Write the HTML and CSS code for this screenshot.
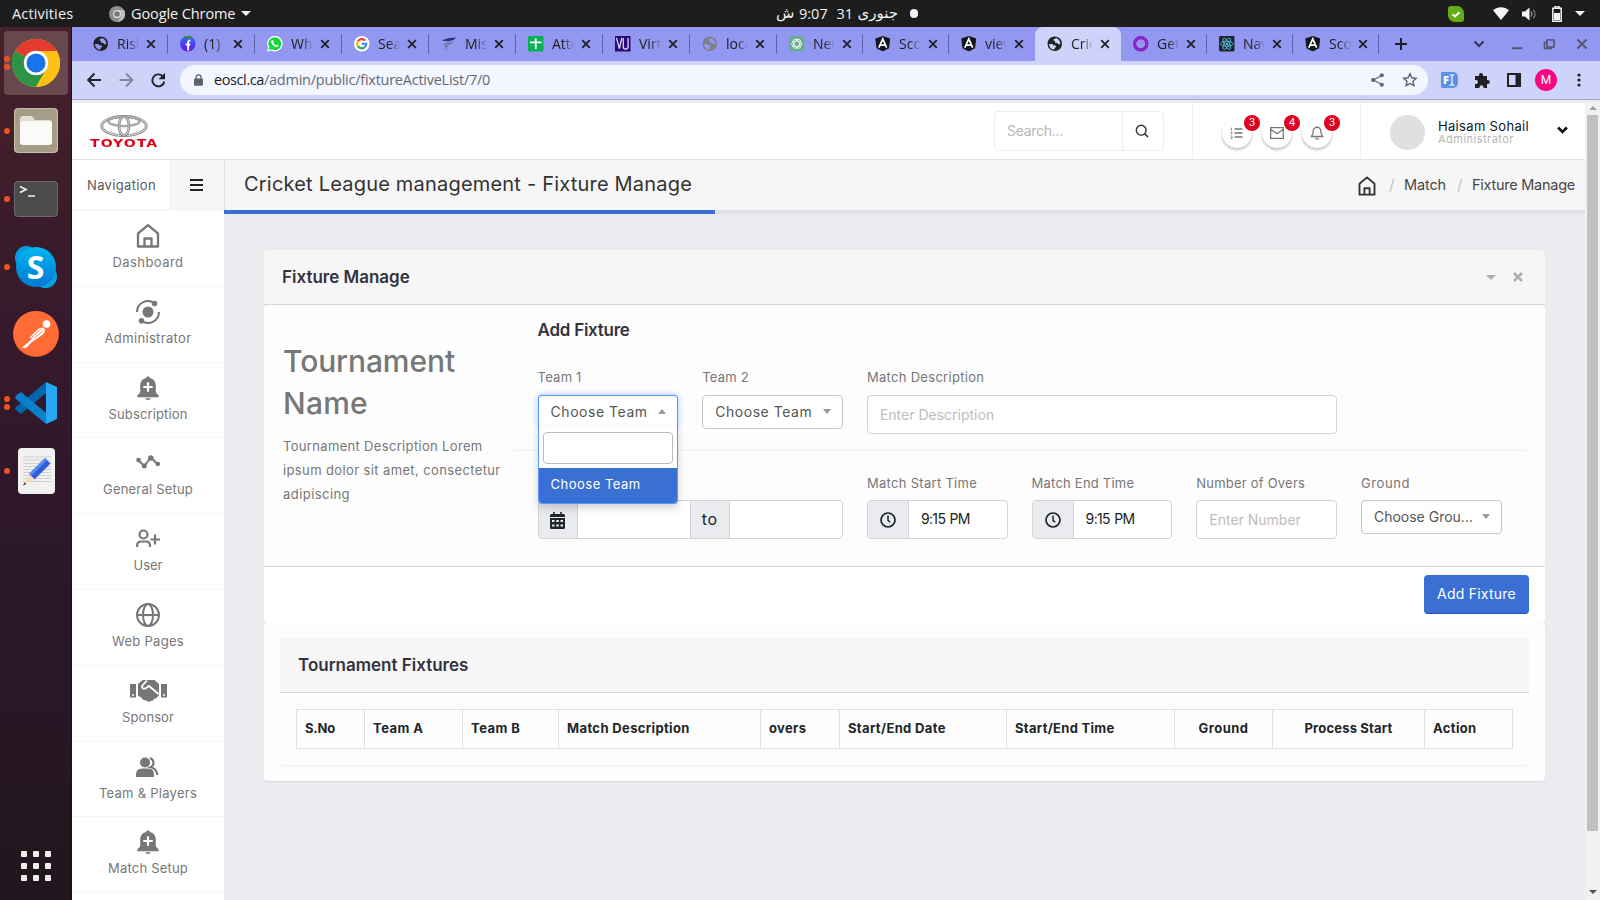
FILE: index.html
```html
<!DOCTYPE html>
<html lang="en">
<head>
<meta charset="utf-8">
<title>Fixture Manage</title>
<link rel="stylesheet" href="styles.css">
</head>
<body>
<svg class="defs" width="0" height="0">
  <symbol id="x" viewBox="0 0 10 10"><path d="M1.2 1.2l7.6 7.6M8.800 1.200l-7.600 7.600" fill="none" stroke="currentColor" stroke-width="1.800"/></symbol>
  <symbol id="globe" viewBox="0 0 16 16"><circle cx="8" cy="8" r="7.500" fill="currentColor"/><path d="M2 8.200h3.500l1.500 1.600h2.200v1.700l-1.500 1v1.800Q2.500 13.800 2 8.200zM9.500 2q-1 .8-2.700 1v1.600l1.600.8v1.800h2.200l1 1.200h2.200Q13.800 4 9.500 2z" fill="var(--hole)"/></symbol>
  <symbol id="angular" viewBox="0 0 16 16"><path d="M8 0l7.700 2.600-1.200 10L8 16l-6.500-3.400L.3 2.600z" fill="#14161f"/><path d="M4 12L8 3l4 9M5.500 9.500h5" fill="none" stroke="#fff" stroke-width="1.800"/></symbol>
  <symbol id="home" viewBox="0 0 24 24"><path d="M2 9.500L12 1.200l10 8.300V22.500H2zM8.500 22V14.500h7V22" fill="none" stroke="currentColor" stroke-width="2.300" stroke-linejoin="round"/></symbol>
  <symbol id="bellplus" viewBox="0 0 24 24"><path d="M12 .5c1.100 0 1.800.6 2 1.600 3.600 1 5.800 3.900 5.800 7.700v6.700l2.900 3v1.700H1.300v-1.700l2.900-3V9.800c0-3.800 2.200-6.700 5.800-7.700.2-1 .9-1.600 2-1.600zM9 22.300h6c-.6 1.200-1.700 1.700-3 1.700s-2.400-.5-3-1.700z" fill="currentColor"/><path d="M12 6.300v9.400M7.300 11h9.400" stroke="#fff" stroke-width="2.200"/></symbol>
  <symbol id="clock" viewBox="0 0 16 16"><circle cx="8" cy="8" r="7" fill="none" stroke="currentColor" stroke-width="1.700"/><path d="M8 3.500V8.300l2.200 1.900" fill="none" stroke="currentColor" stroke-width="1.500"/></symbol>
</svg>

<div class="topbar">
  <span class="tx activities">Activities</span>
  <svg class="tb-chrome" viewBox="0 0 16 16"><circle cx="8" cy="8" r="8" fill="#8d8d8d"/><path d="M8 4h7a8 8 0 0 1-6 12l3-6" fill="#bdbdbd"/><circle cx="8" cy="8" r="4" fill="#ddd"/><circle cx="8" cy="8" r="2.800" fill="#777"/></svg>
  <span class="tx appname">Google Chrome</span>
  <i class="tri app-tri"></i>
  <div class="clockbox"><span class="ur">ش</span><span class="tx hm">9:07</span><span class="tx dd">31</span><span class="ur mon">جنوری</span><i class="dot"></i></div>
  <div class="tray">
    <svg class="tr-skype" viewBox="0 0 16 16"><path d="M3 0h7c4 1 6 4 6 8v5c0 2-1 3-3 3H7c-4 0-7-3-7-7V3c0-2 1-3 3-3z" fill="#63ab17"/><path d="M4.500 8.200l2.500 2.300 4.500-4.300" fill="none" stroke="#fff" stroke-width="1.900"/></svg>
    <svg class="tr-wifi" viewBox="0 0 16 13"><path d="M0 3.200C4.500-.7 11.500-.7 16 3.200L8 13z" fill="#f4f4f4"/></svg>
    <svg class="tr-vol" viewBox="0 0 15 14"><path d="M0 4.500h3L7.500.5v13L3 9.500H0z" fill="#f4f4f4"/><path d="M9 4.500c1.300 1.500 1.300 3.500 0 5M11.300 2.700c2.400 2.500 2.400 6 0 8.600" fill="none" stroke="#888" stroke-width="1.200"/></svg>
    <svg class="tr-bat" viewBox="0 0 10 16"><path d="M3 0h4v2H3zM0.800 2.300h8.400v12.900H.8z" fill="none" stroke="#f4f4f4" stroke-width="1.500"/><path d="M2 7h6v7H2z" fill="#f4f4f4"/></svg>
    <i class="tri"></i>
  </div>
</div>

<div class="desk">
<aside class="dock">
  <div class="dk active"><i class="run two"></i>
    <svg width="48" height="48" viewBox="0 0 48 48"><circle cx="24" cy="24" r="24" fill="#fbc116"/><path d="M24 24L3.200 12A24 24 0 0 1 44.800 12z" fill="#e33b2e"/><path d="M3.200 12A24 24 0 0 0 24 48l10.400-18L24 24z" fill="#2c9447"/><path d="M24 12h20.800A24 24 0 0 1 24 48l10.400-18z" fill="#fbc116"/><circle cx="24" cy="24" r="12.200" fill="#fff"/><circle cx="24" cy="24" r="9.500" fill="#1a73e8"/></svg></div>
  <div class="dk d-files"><i class="run"></i>
    <svg width="44" height="45" viewBox="0 0 44 45"><rect width="44" height="45" rx="4" fill="#a59d88"/><rect x=".5" y=".5" width="43" height="44" rx="4" fill="none" stroke="#c4bda8"/><path d="M6 11q0-3 3-3h9l3 4h14q3 0 3 3v18H6z" fill="#e4dfd2"/><rect x="6" y="13" width="32" height="24" rx="3" fill="#fafaf8"/></svg></div>
  <div class="dk d-term"><i class="run"></i>
    <svg width="44" height="36" viewBox="0 0 44 36"><rect width="44" height="36" rx="4" fill="#4b4b4b"/><rect x=".5" y=".5" width="43" height="35" rx="4" fill="none" stroke="#6b6b6b"/><path d="M6 5.500l6 3-6 3M14 15h7" fill="none" stroke="#f2f2f2" stroke-width="1.700"/></svg></div>
  <div class="dk d-skype"><i class="run"></i>
    <svg width="42" height="42" viewBox="0 0 42 42"><defs><linearGradient id="sk" x2="0" y2="1"><stop stop-color="#00b7f0"/><stop offset="1" stop-color="#0078d4"/></linearGradient></defs><circle cx="11.500" cy="11.500" r="11.500" fill="#0a9ade"/><circle cx="30.500" cy="30.500" r="11.500" fill="#0ba0d8"/><circle cx="21" cy="21" r="20" fill="url(#sk)"/></svg><b class="sk-s">S</b></div>
  <div class="dk d-postman">
    <svg width="46" height="46" viewBox="0 0 46 46"><circle cx="23" cy="23" r="23" fill="#e3592a"/><circle cx="23" cy="22.500" r="22.500" fill="#ff6c37"/><circle cx="33.500" cy="13" r="3.800" fill="#fff"/><path d="M31 17c-3-2-7 2-10 5l-5 5 4-.5-5 5-6 5 4 .5 6-6 9-6c3-2 5-5 3-8z" fill="#fff"/><path d="M19 26l9-8M21 27l9-7" stroke="#ff6c37" stroke-width=".8"/></svg></div>
  <div class="dk d-code"><i class="run two"></i>
    <svg width="42" height="42" viewBox="0 0 42 42"><path d="M31 0v11L6 32l-5-3.500c-1-1-1-2.500 0-3.500z" fill="#0065a9"/><path d="M31 42V31L6 10l-5 3.500c-1 1-1 2.500 0 3.500z" fill="#0a7fca"/><path d="M31 0l11 5v32l-11 5z" fill="#27a7f3"/></svg></div>
  <div class="dk d-edit"><i class="run"></i>
    <svg width="37" height="46" viewBox="0 0 37 46"><rect width="37" height="46" rx="4" fill="#f1f1ef"/><path d="M5 9h28M5 12h28M5 15.500h28M5 18.500h28M5 21.500h28M5 24.500h28M5 27.500h28M5 30.500h28M5 33.500h28" stroke="#cfcfcf"/><path d="M27 10l5.500 5.500-16 16L11 26z" fill="#2f5fd8"/><path d="M27 10l2 2-16 16-2-2z" fill="#5b8bf0"/><path d="M11 26l5.500 5.500L5 37.500z" fill="#f7dcc0"/><path d="M6.500 34.500l1.800 1.500L5 37.500z" fill="#333"/></svg></div>
  <div class="apps"><i></i><i></i><i></i><i></i><i></i><i></i><i></i><i></i><i></i></div>
</aside>

<div class="browser">
<div class="tabs">
  <div class="tab"><svg class="fv k"><use href="#globe"/></svg><span>Risk</span><svg class="cl"><use href="#x"/></svg></div>
  <div class="tab"><svg class="fv" viewBox="0 0 16 16"><defs><linearGradient id="fb" x2="0" y2="1"><stop stop-color="#2a73f2"/><stop offset="1" stop-color="#6a12f0"/></linearGradient></defs><circle cx="8" cy="8" r="8" fill="url(#fb)"/><path d="M4 1.200h8" stroke="#3f8f1c" stroke-width="1.800"/><path d="M8.400 15V6.500q0-2 2.400-1.800M5.800 8.800h4.800" fill="none" stroke="#fff" stroke-width="1.900"/></svg><span>(1) F</span><svg class="cl"><use href="#x"/></svg></div>
  <div class="tab"><svg class="fv" viewBox="0 0 16 16"><path d="M0 16l1.200-4.200A8 8 0 1 1 4.500 15z" fill="#fff"/><path d="M1.500 14.500l1-3A6.600 6.600 0 1 1 5 13.800z" fill="#10d83a"/><path d="M5 4.500q1.500-1 2 1.500L6.500 7q1 2 2.700 2.600l1-.9q2.300.6 1.300 2-2.500 1.800-5.500-1.300T5 4.500z" fill="#fff"/></svg><span>Wha</span><svg class="cl"><use href="#x"/></svg></div>
  <div class="tab"><svg class="fv" viewBox="0 0 16 16"><circle cx="8" cy="8" r="8" fill="#fff"/><g fill="none" stroke-width="2.200"><path d="M4 5.600a4.700 4.700 0 0 1 7.500-1" stroke="#ea4335"/><path d="M4 5.500a4.700 4.700 0 0 0 0 5" stroke="#fbbc05"/><path d="M4 10.500a4.700 4.700 0 0 0 7 1.200" stroke="#34a853"/><path d="M8 8h4.700q0 2.400-1.700 3.700" stroke="#4285f4"/></g></svg><span>Sear</span><svg class="cl"><use href="#x"/></svg></div>
  <div class="tab"><svg class="fv" viewBox="0 0 16 16"><path d="M1 5c4-3 8-3 15-3.500-3 3.500-7 3.500-9 4z" fill="#27357c"/><path d="M3 8c3-1.500 6-1.500 10-2-2 3-4 3-6 3.500L5 15z" fill="#6e7fa8"/></svg><span>Miss</span><svg class="cl"><use href="#x"/></svg></div>
  <div class="tab"><svg class="fv" viewBox="0 0 16 16"><rect width="16" height="16" rx="1" fill="#08b155"/><path d="M2 6.500h12M8 2.500v11" stroke="#fff" stroke-width="1.900"/></svg><span>Atte</span><svg class="cl"><use href="#x"/></svg></div>
  <div class="tab"><svg class="fv" viewBox="0 0 16 16"><rect width="16" height="16" fill="#2c0b78"/><path d="M1.500 2l3 11L7 2M8.500 2v9q0 2.500 2.500 2.500T13.500 11V2" fill="none" stroke="#e8dcf8" stroke-width="1.300"/></svg><span>Virt</span><svg class="cl"><use href="#x"/></svg></div>
  <div class="tab"><svg class="fv gr"><use href="#globe"/></svg><span>loca</span><svg class="cl"><use href="#x"/></svg></div>
  <div class="tab"><svg class="fv" viewBox="0 0 16 16"><rect width="16" height="16" rx="2.500" fill="#6bab95"/><g fill="none" stroke="#fff" stroke-width=".8"><ellipse cx="8" cy="8" rx="5.300" ry="2.800"/><ellipse cx="8" cy="8" rx="5.300" ry="2.800" transform="rotate(60 8 8)"/><ellipse cx="8" cy="8" rx="5.300" ry="2.800" transform="rotate(120 8 8)"/></g></svg><span>New</span><svg class="cl"><use href="#x"/></svg></div>
  <div class="tab"><svg class="fv"><use href="#angular"/></svg><span>Scop</span><svg class="cl"><use href="#x"/></svg></div>
  <div class="tab nosep"><svg class="fv"><use href="#angular"/></svg><span>view</span><svg class="cl"><use href="#x"/></svg></div>
  <div class="tab on"><svg class="fv k"><use href="#globe"/></svg><span>Crick</span><svg class="cl"><use href="#x"/></svg></div>
  <div class="tab"><svg class="fv" viewBox="0 0 16 16"><circle cx="8" cy="8" r="6.300" fill="none" stroke="#8213c0" stroke-width="3.200"/><circle cx="8" cy="8" r="6.300" fill="none" stroke="#b56be0" stroke-width=".8" stroke-dasharray="2 1.500"/></svg><span>Get</span><svg class="cl"><use href="#x"/></svg></div>
  <div class="tab"><svg class="fv" viewBox="0 0 16 16"><rect width="16" height="16" rx="1.500" fill="#20232a"/><g fill="none" stroke="#53c1de" stroke-width=".9"><ellipse cx="8" cy="8" rx="6.500" ry="2.600"/><ellipse cx="8" cy="8" rx="6.500" ry="2.600" transform="rotate(60 8 8)"/><ellipse cx="8" cy="8" rx="6.500" ry="2.600" transform="rotate(120 8 8)"/></g><circle cx="8" cy="8" r="1.400" fill="#53c1de"/></svg><span>Navi</span><svg class="cl"><use href="#x"/></svg></div>
  <div class="tab"><svg class="fv"><use href="#angular"/></svg><span>Scop</span><svg class="cl"><use href="#x"/></svg></div>
  <svg class="plus" viewBox="0 0 12 12"><path d="M6 0v12M0 6h12" stroke="#202124" stroke-width="2"/></svg>
  <svg class="winctl" viewBox="0 0 120 20"><path d="M5.500 7.500l4.500 4.500 4.500-4.500" fill="none" stroke="#34365c" stroke-width="2"/><g fill="none" stroke="#54566f" stroke-width="1.900"><path d="M43 14.200h10.500"/><path d="M78 6h7v7h-7zM78 8.500h-2.500v6H82V13" stroke-width="1.700"/><path d="M108.500 5.500l9 9M117.500 5.500l-9 9" stroke-width="2"/></g></svg>
</div>
<div class="toolbar">
  <svg class="nav3" viewBox="0 0 80 16"><g fill="none" stroke-width="1.900"><path d="M14 8H1.500M7.500 1.500L1.200 8l6.300 6.500" stroke="#202124"/><path d="M32.500 8H45M39 1.500L45.400 8 39 14.500" stroke="#8286a3"/><path d="M75.800 4.300A6 6 0 1 0 77.300 9.500" stroke="#202124"/></g><path d="M78 .8v6.400h-6.400z" fill="#202124"/></svg>
  <div class="omni">
    <svg class="lock" viewBox="0 0 9 12"><rect y="4.500" width="9" height="7.300" rx="1" fill="#5f6368"/><path d="M2 5V3.300a2.500 2.500 0 0 1 5 0V5" fill="none" stroke="#5f6368" stroke-width="1.300"/></svg>
    <span class="tx host">eoscl.ca</span><span class="tx path">/admin/public/fixtureActiveList/7/0</span>
    <svg class="share" viewBox="0 0 13 14"><path d="M10.500 2.500L2.500 7l8 4.500" fill="none" stroke="#5f6368" stroke-width="1.200"/><g fill="#5f6368"><circle cx="10.800" cy="2.300" r="2"/><circle cx="2.200" cy="7" r="2.100"/><circle cx="10.800" cy="11.700" r="2"/></g></svg>
    <svg class="star" viewBox="0 0 16 16"><path d="M8 1.800l1.900 4 4.400.5-3.300 3 .9 4.400L8 11.500l-3.900 2.200.9-4.400-3.300-3 4.400-.5z" fill="none" stroke="#5f6368" stroke-width="1.400"/></svg>
  </div>
  <div class="exts">
    <div class="fi"><b>F</b><svg width="6" height="12" viewBox="0 0 6 12"><path d="M.5.800q2.500 0 2.500 1.500v7.500q0 1.500-2.500 1.500M5.500.800q-2.500 0-2.500 1.500v7.500q0 1.500 2.500 1.500" fill="none" stroke="#fff" stroke-width="1.100"/></svg></div>
    <svg class="puz" viewBox="0 0 16 16"><path d="M1 4h4V3a2 2 0 0 1 4 0v1h4v4h.8a2 2 0 0 1 0 4H13v4H9.500v-.8a2 2 0 0 0-4 0V16H1v-4h1a2 2 0 0 0 0-4H1z" fill="#202124"/></svg>
    <svg class="panel-i" viewBox="0 0 14 14"><path d="M1 1h12v12H1z" fill="none" stroke="#202124" stroke-width="2"/><path d="M8.500 1H13v12H8.500z" fill="#202124"/></svg>
    <span class="me">M</span>
    <svg class="dots" viewBox="0 0 4 14"><g fill="#202124"><circle cx="2" cy="2" r="1.600"/><circle cx="2" cy="7" r="1.600"/><circle cx="2" cy="12" r="1.600"/></g></svg>
  </div>
</div>

<div class="view">
<div class="page">
  <header class="head">
    <div class="logo">
      <svg width="48" height="22" viewBox="0 0 48 22"><g fill="none"><ellipse cx="24" cy="11" rx="22.300" ry="9.500" stroke="#858585" stroke-width="2.800"/><ellipse cx="24" cy="10.800" rx="22.300" ry="9.600" stroke="#cdcdcd" stroke-width="1.300"/><ellipse cx="24" cy="6.300" rx="15.500" ry="4.800" stroke="#858585" stroke-width="2.300"/><ellipse cx="24" cy="6.200" rx="15.500" ry="4.800" stroke="#cdcdcd" stroke-width="1"/><ellipse cx="24" cy="11" rx="5" ry="9.300" stroke="#858585" stroke-width="2.600"/><ellipse cx="24" cy="11" rx="5" ry="9.300" stroke="#cdcdcd" stroke-width="1.100"/></g></svg>
      <b>TOYOTA</b>
    </div>
    <div class="search"><span class="tx s-ph">Search...</span><div class="s-btn"><svg width="14" height="14" viewBox="0 0 14 14"><circle cx="6.200" cy="6.200" r="4.900" fill="none" stroke="#333" stroke-width="1.400"/><path d="M9.800 9.800l3.200 3.200" stroke="#333" stroke-width="1.700"/></svg></div></div>
    <div class="notes">
      <div class="nt"><svg width="14" height="12" viewBox="0 0 14 12"><path d="M4.500 2h8M4.500 6h8M4.500 10h8" stroke="#777" stroke-width="1.300"/><path d="M1.500.5v3M.5 5.200h1.500v1.600H.6M.5 9h1.500v2.500H.5" fill="none" stroke="#777" stroke-width=".8"/></svg><em>3</em></div>
      <div class="nt"><svg width="14" height="12" viewBox="0 0 14 12"><path d="M.7.7h12.600v10.600H.7zM1 2.500l6 4.300 6-4.300" fill="none" stroke="#777" stroke-width="1.300"/></svg><em>4</em></div>
      <div class="nt"><svg width="14" height="14" viewBox="0 0 14 14"><path d="M7 1.300c2.400 0 3.800 1.700 3.800 4 0 3.300 1 4 1.900 5.200H1.300C2.200 9.300 3.200 8.600 3.200 5.300c0-2.300 1.400-4 3.800-4zM5.500 12.200q1.500 1.500 3 0M7 0v1.500" fill="none" stroke="#777" stroke-width="1.300" stroke-linejoin="round"/></svg><em>3</em></div>
    </div>
    <div class="user"><i class="ava"></i><div class="who"><span class="tx nm">Haisam Sohail</span><span class="tx rl">Administrator</span></div>
      <svg class="chev" viewBox="0 0 10 7"><path d="M1 1.200l4 4 4-4" fill="none" stroke="#111" stroke-width="2.400"/></svg></div>
  </header>

  <div class="sub">
    <div class="navt"><span class="tx nv">Navigation</span></div>
    <div class="burger"><i></i><i></i><i></i></div>
    <div class="titlebar"><span class="tx ttl">Cricket League management - Fixture Manage</span>
      <nav class="crumb"><svg width="18" height="20" viewBox="0 0 24 26"><path d="M2 10L12 1.500 22 10v14.500H2zM8.500 24V16h7v8" fill="none" stroke="#333" stroke-width="2.500" stroke-linejoin="round"/></svg><span class="sl s1">/</span><span class="tx mt">Match</span><span class="sl">/</span><span class="tx fm">Fixture Manage</span></nav>
    </div>
  </div>

  <div class="cols">
  <aside class="side">
    <div class="it"><svg width="24" height="24"><use href="#home"/></svg><span class="tx n1">Dashboard</span></div>
    <div class="it"><svg width="24" height="24" viewBox="0 0 24 24"><circle cx="12" cy="12" r="5.500" fill="currentColor"/><g fill="none" stroke="currentColor" stroke-width="2"><path d="M1 12A11 11 0 0 1 18 2.800M23 12A11 11 0 0 1 6 21.200"/></g><circle cx="18.500" cy="3.500" r="2.800" fill="currentColor"/><circle cx="5.500" cy="20.800" r="2.800" fill="currentColor"/></svg><span class="tx n2">Administrator</span></div>
    <div class="it"><svg width="24" height="24"><use href="#bellplus"/></svg><span class="tx n3">Subscription</span></div>
    <div class="it"><svg width="24" height="24" viewBox="0 0 24 24"><path d="M2.300 9.300L8.300 15l6.500-8.500 7.200 7" fill="none" stroke="currentColor" stroke-width="2"/><g fill="currentColor"><circle cx="2.500" cy="9" r="2.300"/><circle cx="8.300" cy="15" r="2.500"/><circle cx="14.800" cy="7" r="2.800"/><circle cx="21.800" cy="13" r="2.300"/></g></svg><span class="tx n4">General Setup</span></div>
    <div class="it"><svg width="24" height="24" viewBox="0 0 24 24"><g fill="none" stroke="currentColor" stroke-width="2.200"><circle cx="7.500" cy="7.500" r="4"/><path d="M1.100 20v-1.500q0-4 4-4H10q4 0 4 4V20M19 7.500v10M14.500 12.500h9.500"/></g></svg><span class="tx n5">User</span></div>
    <div class="it"><svg width="24" height="24" viewBox="0 0 24 24"><g fill="none" stroke="currentColor" stroke-width="2"><circle cx="12" cy="12" r="11"/><ellipse cx="12" cy="12" rx="5" ry="11"/><path d="M1 12h22"/></g></svg><span class="tx n6">Web Pages</span></div>
    <div class="it"><svg width="37" height="24" viewBox="0 0 37 24"><g fill="currentColor"><path d="M0 5h6v13.500H0zM31 5h6v13.500h-6z"/><path d="M8 5l4.500-4h12l4.500 4v11l-2.500 3-2.200.8-1.800 2-2 .2-2 1-2.500-1.500-2.500-.5L10 17.500 8 17z"/></g><path d="M17 1.500L12 7q0 3.500 3.500 2.500L19 7l9.500 8" fill="none" stroke="#fff" stroke-width="1.800"/><circle cx="3" cy="16" r="1" fill="#fff"/><circle cx="34" cy="16" r="1" fill="#fff"/></svg><span class="tx n7">Sponsor</span></div>
    <div class="it"><svg width="24" height="24" viewBox="0 0 24 24"><circle cx="9" cy="7.500" r="5" fill="currentColor"/><path d="M0 22v-2.500q0-6 6-6h6q6 0 6 6V22z" fill="currentColor"/><path d="M14 3q3.500 1.500 3.500 4.700t-3 4.600q6 1 7 7.700" fill="none" stroke="currentColor" stroke-width="2.100"/></svg><span class="tx n8">Team &amp; Players</span></div>
    <div class="it"><svg width="24" height="24"><use href="#bellplus"/></svg><span class="tx n9">Match Setup</span></div>
    <div class="it"></div>
  </aside>

  <main class="main">
    <div class="progress"><i></i></div>
    <section class="card">
      <div class="ch"><span class="tx h1">Fixture Manage</span><i class="tri ct"></i><svg class="cx" viewBox="0 0 10 10"><path d="M1 1l8 8M9 1l-8 8" stroke="#b0b0b0" stroke-width="2.600"/></svg></div>
      <div class="cb">
        <div class="intro"><h2><span class="tx b1">Tournament</span><br><span class="tx b2">Name</span></h2>
          <p><span class="tx p1">Tournament Description Lorem</span><br><span class="tx p2">ipsum dolor sit amet, consectetur</span><br><span class="tx p3">adipiscing</span></p></div>
        <div class="form">
          <div class="af"><span class="tx h2">Add Fixture</span></div>
          <div class="grid g1">
            <div class="f"><label class="tx">Team 1</label>
              <div class="sel open"><span class="tx ctm">Choose Team</span><i class="tri up"></i>
                <div class="drop"><div class="dsearch"></div><div class="opt"><span class="tx ctd">Choose Team</span></div></div></div></div>
            <div class="f"><label class="tx">Team 2</label><div class="sel"><span class="tx ctm">Choose Team</span><i class="tri gy"></i></div></div>
            <div class="f w3"><label class="tx l3">Match Description</label><div class="inp"><span class="tx">Enter Description</span></div></div>
          </div>
          <hr>
          <div class="grid g2">
            <div class="f w2"><label>&nbsp;</label><div class="group"><div class="add a1"><svg width="15" height="17" viewBox="0 0 15 17"><path d="M3.200 0h1.600v2h5.400V0h1.600v2H13.500q1.500 0 1.500 1.500V5H0V3.500Q0 2 1.500 2h1.700z" fill="#212529"/><path d="M0 6h15v9.500q0 1.500-1.500 1.500h-12Q0 17 0 15.500z" fill="#212529"/><path d="M2 8h2.500v2H2zM6.300 8h2.500v2H6.300zM10.500 8H13v2h-2.500zM2 12.500h2.500v2H2zM6.300 12.500h2.500v2H6.300zM10.500 12.500H13v2h-2.500z" fill="#e9ebef"/></svg></div><div class="gi"></div><div class="add mid"><span class="tx to">to</span></div><div class="gi"></div></div></div>
            <div class="f"><label class="tx l4">Match Start Time</label><div class="group"><div class="add a2"><svg width="16" height="16"><use href="#clock"/></svg></div><div class="gi tm"><span class="tx tme">9:15 PM</span></div></div></div>
            <div class="f"><label class="tx">Match End Time</label><div class="group"><div class="add a2"><svg width="16" height="16"><use href="#clock"/></svg></div><div class="gi tm"><span class="tx tme">9:15 PM</span></div></div></div>
            <div class="f"><label class="tx">Number of Overs</label><div class="inp"><span class="tx">Enter Number</span></div></div>
            <div class="f"><label class="tx l7">Ground</label><div class="sel"><span class="tx">Choose Grou...</span><i class="tri gy"></i></div></div>
          </div>
        </div>
      </div>
      <div class="cf"><div class="btn"><span class="tx bt">Add Fixture</span></div></div>
      <div class="tf">
        <div class="panel">
          <div class="ph"><span class="tx h3">Tournament Fixtures</span></div>
          <div class="pb">
            <div class="table">
              <div><span class="tx c1">S.No</span></div><div><span class="tx c2">Team A</span></div><div><span class="tx c3">Team B</span></div><div><span class="tx c4">Match Description</span></div><div><span class="tx c5">overs</span></div><div><span class="tx c6">Start/End Date</span></div><div><span class="tx c7">Start/End Time</span></div><div class="c"><span class="tx c8">Ground</span></div><div class="c"><span class="tx c9">Process Start</span></div><div><span class="tx c10">Action</span></div>
            </div>
          </div>
        </div>
      </div>
    </section>
  </main>
  </div>
</div>
<div class="scroll"><i class="tri sup"></i><div class="thumb"></div><i class="tri sdn"></i></div>
</div>
</div>
</div>
</body>
</html>
```
FILE: styles.css
```css
* { box-sizing: border-box; }
body { margin: 0; width: 1600px; height: 900px; overflow: hidden; display: flex; flex-direction: column; font-family: Inter, "Open Sans", sans-serif; color: #777; background: #ebebf0; }
svg { display: block; flex: none; }
.defs { position: absolute; }
.tx { white-space: nowrap; flex: none; }
.tri { display: block; width: 0; height: 0; border-style: solid; border-width: 5px 5px 0; border-color: #f4f4f4 transparent transparent; flex: none; }

/* desktop bar */
.topbar { height: 27px; flex: none; background: #1d1d1d; color: #f2f2f2; display: flex; align-items: center; padding-left: 12px; font: 14.500px/27px "Open Sans", sans-serif; }
.activities { width: 97px; letter-spacing: .15px; }
.tb-chrome { width: 16px; height: 16px; margin-right: 6px; }
.appname { width: 110px; letter-spacing: -.1px; }
.clockbox { display: flex; align-items: center; margin-left: 525px; width: 672px; }
.ur { font: 15px/27px "DejaVu Sans", sans-serif; flex: none; width: 18px; margin-right: 5px; }
.mon { width: 38px; margin-right: 14px; }
.hm { width: 37.500px; }
.dd { width: 21px; }
.dot { width: 8.500px; height: 8.500px; border-radius: 50%; background: #f4f4f4; }
.tray { display: flex; align-items: center; }
.tr-skype { width: 16px; height: 16px; margin-right: 29px; }
.tr-wifi { width: 16px; height: 13px; margin-right: 13px; }
.tr-vol { width: 15px; height: 14px; margin-right: 15px; }
.tr-bat { width: 10px; height: 16px; margin-right: 13px; }

.desk { flex: 1; display: flex; min-height: 0; }

/* dock */
.dock { width: 72px; flex: none; background: linear-gradient(#46222a 0, #3a1b2b 25%, #2e172b 55%, #21161d 100%); border-right: 1px solid #1b1018; display: flex; flex-direction: column; align-items: center; padding-top: 4px; }
.dk { width: 64px; display: flex; justify-content: center; align-items: center; position: relative; flex: none; }
.dk.active { height: 64px; border-radius: 4px; background: #6a4850; }
.d-files { height: 45px; margin-top: 13px; }
.d-term { height: 36px; margin-top: 28px; }
.d-skype { height: 42px; margin-top: 29px; }
.sk-s { position: absolute; font: bold 32px/42px "Open Sans", sans-serif; color: #fff; }
.d-postman { height: 46px; margin-top: 23px; }
.d-code { height: 42px; margin-top: 25px; }
.d-edit { height: 46px; margin-top: 24px; padding-left: 1px; }
.run { position: absolute; left: 0; top: calc(50% - 3px); width: 6px; height: 6px; border-radius: 50%; background: #e95420; }
.run.two { top: calc(50% - 7px); box-shadow: 0 8px #e95420; }
.apps { margin-top: auto; margin-bottom: 19px; display: grid; grid-template-columns: repeat(3, 6px); gap: 6px; }
.apps i { height: 6px; border-radius: 1px; background: #f0eeec; }

/* browser chrome */
.browser { flex: 1; min-width: 0; display: flex; flex-direction: column; }
.tabs { height: 34px; flex: none; background: #9297ef; display: flex; align-items: center; padding-left: 8.500px; font: 14px/34px "Open Sans", sans-serif; color: #202124; }
.tab { --hole: #9297ef; width: 86px; height: 34px; flex: none; display: flex; align-items: center; padding-left: 12.500px; background: linear-gradient(#5d61a8, #5d61a8) right center / 1px 20px no-repeat; }
.tab:nth-child(-n+8) { width: 87px; }
.tab span { width: 22px; margin-left: 8.500px; white-space: nowrap; flex: none; -webkit-mask-image: linear-gradient(90deg, #000 50%, transparent); mask-image: linear-gradient(90deg, #000 50%, transparent); }
.tab.nosep { background: none; }
.tab.on { --hole: #ced3fa; background: #ced3fa; border-radius: 8px 8px 0 0; }
.fv { width: 15.500px; height: 15.500px; color: #202124; }
.fv.gr { color: #7e7e86; }
.cl { width: 10px; height: 10px; margin-left: 7px; }
.plus { width: 12px; height: 12px; margin-left: 16.500px; }
.winctl { width: 120px; height: 20px; margin-left: 62px; }
.toolbar { height: 39px; flex: none; background: #ced3fa; border-bottom: 1px solid #a3a6cf; display: flex; align-items: center; padding-left: 15px; }
.nav3 { width: 80px; height: 16px; }
.omni { margin-left: 13px; width: 1248px; height: 30px; flex: none; border-radius: 15px; background: #f3f6fe; display: flex; align-items: center; padding-left: 14px; font: 14.500px/30px "Open Sans", sans-serif; color: #202124; }
.lock { width: 9px; height: 12px; margin-right: 11px; }
.host { letter-spacing: -.4px; }
.path { color: #666a75; letter-spacing: -.25px; }
.share { width: 13px; height: 14px; margin-left: auto; margin-right: 18px; }
.star { width: 16px; height: 16px; margin-right: 10px; }
.exts { display: flex; align-items: center; margin-left: 13px; }
.fi { width: 17px; height: 16px; background: #5a93e6; border-radius: 1px 5px 5px 1px; display: flex; align-items: center; padding-left: 2px; color: #fff; font: bold 11px/16px "Open Sans", sans-serif; }
.puz { width: 16px; height: 16px; margin-left: 16px; }
.panel-i { width: 14px; height: 14px; margin-left: 17px; }
.me { width: 22px; height: 22px; border-radius: 50%; background: #fb0680; color: #fff; font: 12px/22px Roboto, sans-serif; text-align: center; margin: 0 20px 0 14px; }
.dots { width: 4px; height: 14px; }
.view { flex: 1; display: flex; min-height: 0; background: #fff; border-top: 3px solid #ececec; }
.page { flex: 1; min-width: 0; display: flex; flex-direction: column; }
.scroll { width: 15px; flex: none; background: #f1f1f1; display: flex; flex-direction: column; align-items: center; }
.thumb { width: 11px; height: 716px; margin-top: 5px; background: #c1c1c1; }
.sup { margin-top: 3px; border-width: 0 4px 4px; border-color: transparent transparent #a0a0a0; }
.sdn { margin-top: auto; margin-bottom: 6px; border-width: 4px 4px 0; border-top-color: #505050; }

/* site header */
.head { height: 57px; flex: none; background: #fff; border-bottom: 1px solid #e4e4e4; display: flex; align-items: stretch; }
.logo { width: 922px; padding: 12px 0 0 18px; display: flex; flex-direction: column; align-items: flex-start; color: #e0001b; }
.logo svg { margin-left: 10px; }
.logo b { font: bold 11px/11px "DejaVu Sans", sans-serif; margin-top: 1px; letter-spacing: .8px; transform: scaleX(1.280); transform-origin: left; }
.search { width: 170px; height: 40px; margin-top: 8px; border: 1px solid #ececec; border-radius: 4px; display: flex; align-items: center; padding-left: 12px; color: #b9b9b9; font-size: 14px; }
.s-ph { letter-spacing: -.28px; padding-bottom: 2px; }
.s-btn { margin-left: auto; width: 41px; height: 38px; border-left: 1px solid #ececec; display: flex; align-items: center; justify-content: center; padding-right: 2px; }
.notes { margin-left: 28px; width: 169px; border: solid #f0f0f0; border-width: 0 1px; display: flex; gap: 10px; padding: 15px 0 0 29px; }
.nt { width: 30px; height: 30px; border-radius: 50%; background: #fff; box-shadow: 0 2px 3px rgba(0,0,0,.25); display: flex; align-items: center; justify-content: center; position: relative; }
.nt em { position: absolute; left: 22px; top: -3px; width: 16px; height: 16px; border-radius: 50%; background: #e0001f; color: #fff; font: 11px/16px Roboto, sans-serif; text-align: center; }
.user { display: flex; align-items: flex-start; padding: 11px 0 0 29px; }
.ava { width: 35px; height: 35px; border-radius: 50%; background: #e0e0e0; margin-top: 1px; }
.who { width: 119px; margin-left: 13px; display: flex; flex-direction: column; align-items: flex-start; line-height: 13px; padding-top: 6px; }
.nm { font-size: 13px; color: #111827; letter-spacing: .33px; }
.rl { font-size: 11px; color: #b5b5b5; letter-spacing: .48px; }
.chev { width: 11px; height: 8px; margin-top: 12px; }

.sub { height: 50px; flex: none; display: flex; background: #f6f6f6; }
.navt { width: 97px; background: #fff; padding-left: 15px; font-size: 13px; line-height: 50px; color: #5a5a5f; border-bottom: 1px solid #f6f6f6; }
.nv { letter-spacing: .35px; }
.burger { width: 56px; border-right: 1px solid #e0e0e0; display: flex; flex-direction: column; justify-content: center; padding-left: 21px; gap: 3px; }
.burger i { width: 13px; height: 2px; background: #222; }
.titlebar { flex: 1; display: flex; align-items: center; justify-content: space-between; padding: 0 10px 2px 19px; color: #333; font-size: 20px; }
.ttl { letter-spacing: .2px; }
.crumb { display: flex; align-items: center; font-size: 14.500px; color: #484848; }
.crumb svg { margin-top: 3px; }
.crumb .sl { width: 6px; margin: 0 9px 0 11px; color: #c4c4c4; font-size: 15px; }
.crumb .s1 { margin-left: 13px; }
.mt { letter-spacing: -.14px; }
.fm { letter-spacing: -.26px; }
.cols { flex: 1; display: flex; min-height: 0; }
.side { width: 152px; flex: none; background: #fff; overflow: hidden; border-top: 1px solid #f6f6f6; }
.it { height: 75.800px; border-bottom: 1px solid #f6f6f6; display: flex; flex-direction: column; align-items: center; padding-top: 13px; font-size: 13px; line-height: 20px; }
.it svg { margin-bottom: 4px; }
.n1 { letter-spacing: .44px; }
.n2 { letter-spacing: .35px; }
.n3 { letter-spacing: .14px; }
.n4, .n9 { letter-spacing: .2px; }
.n6, .n8 { letter-spacing: .27px; }
.n7 { letter-spacing: .1px; }
.main { flex: 1; background: #ebebf0; }
.progress { height: 4px; background: #e0e0e5; margin-bottom: 36px; }
.progress i { display: block; width: 491px; height: 4px; background: #3a70d4; }

/* fixture card */
.card { margin-left: 40px; width: 1281px; border-radius: 4px; box-shadow: 0 1px 1px #dadae2; }
.ch { height: 55px; background: #f6f6f6; border-bottom: 1px solid #d7d7da; border-radius: 4px 4px 0 0; display: flex; align-items: center; padding: 0 22px 0 18px; color: #33333f; font-size: 17px; font-weight: 600; }
.ct { margin-left: auto; border-width: 5px 5px 0; border-top-color: #b0b0b0; }
.cx { width: 10px; height: 10px; margin-left: 17px; }
.cb { height: 262px; background: #fdfdfd; border-bottom: 1px solid #d9d9dd; border-radius: 4px 4px 0 0; display: flex; }
.intro { width: 249.600px; padding: 35px 0 0 19px; flex: none; }
h2 { margin: 0; font-size: 30px; line-height: 42px; font-weight: 500; }
.b1 { letter-spacing: -.1px; }
.b2 { letter-spacing: .25px; }
p { margin: 10px 0 0; font-size: 13px; line-height: 24px; }
.p1 { letter-spacing: .33px; }
.p2 { letter-spacing: .38px; }
.p3 { letter-spacing: .44px; }
.form { width: 1012px; padding-top: 13px; }
.af { padding-left: 24px; color: #33333f; font-size: 17px; font-weight: 600; line-height: 24px; height: 47px; }
.h2 { letter-spacing: -.26px; }
.grid { display: grid; grid-template-columns: repeat(6, 1fr); gap: 24px; padding: 0 24px; }
.g2 { padding-top: 20px; }
.w2 { grid-column: span 2; }
.w3 { grid-column: 3 / span 3; }
.f label { display: block; height: 30px; font-size: 13px; line-height: 24px; letter-spacing: .22px; }
.f .l3, .f .l4 { letter-spacing: .3px; }
.f .l7 { letter-spacing: .6px; }
hr { border: 0; height: 1px; background: #eee; margin: 16px 0 0; }
.g2 .f label { height: 29px; line-height: 25px; }
.inp { height: 39px; border: 1px solid #cfd3dc; border-radius: 4px; background: #fff; display: flex; align-items: center; padding-left: 12px; font-size: 14px; color: #bdbdbd; padding-bottom: 1px; }
.sel { height: 34px; border: 1px solid #c6c6c6; border-radius: 4px; background: #fff; display: flex; align-items: center; justify-content: space-between; padding: 0 11px 1px 12px; font-size: 14px; color: #555; position: relative; }
.ctm { letter-spacing: .53px; }
.ctd { letter-spacing: .49px; }
.gy { border-width: 5px 4px 0; border-top-color: #999; }
.up { border-width: 0 4px 5px; border-color: transparent transparent #999; }
.open { border: 1px solid #5897fb; border-radius: 4px 4px 0 0; border-bottom: 0; box-shadow: 0 0 6px #9cc0fc; padding-bottom: 2px; }
.drop { position: absolute; left: -1px; right: -1px; top: 31px; height: 77px; background: #fff; border: 1px solid #5897fb; border-top: 0; border-radius: 0 0 4px 4px; padding-top: 5px; box-shadow: 0 4px 8px rgba(0,0,0,.18); z-index: 2; }
.dsearch { height: 32px; margin: 0 4px 4px; border: 1px solid #bbb; border-radius: 4px; }
.opt { height: 35px; background: #3a70d4; color: #fff; padding-left: 12px; line-height: 33px; font-size: 13px; border-radius: 0 0 3px 3px; }
.group { height: 39px; border: 1px solid #cfd3dc; border-radius: 4px; display: flex; background: #fff; overflow: hidden; }
.add { background: #e9ebef; border-right: 1px solid #cfd3dc; display: flex; align-items: center; justify-content: center; color: #212529; font-size: 16px; }
.a1 { width: 39px; padding-top: 1px; }
.a2 { width: 41px; padding-top: 1px; }
.mid { width: 40px; border-left: 1px solid #cfd3dc; padding-bottom: 2px; }
.to { letter-spacing: .6px; }
.gi { flex: 1; display: flex; align-items: center; }
.tm { padding-left: 12px; padding-bottom: 2px; color: #222; font-size: 14px; }
.tme { letter-spacing: -.65px; word-spacing: 1px; }
.cf { height: 55px; background: #fff; display: flex; justify-content: flex-end; padding: 8px 16px 0 0; border-radius: 0 0 4px 4px; }
.btn { width: 105px; height: 39px; border-radius: 4px; background: #3a70d4; border-bottom: 1px solid #2554ae; color: #fff; font-size: 14px; line-height: 38px; text-align: center; }
.bt { letter-spacing: .24px; }
.tf { background: #fdfdfd; border-radius: 4px; padding: 16px 16px 16px; height: 159px; }
.panel { height: 128px; border-bottom: 1px solid #f0f0f2; border-radius: 4px; }
.ph { height: 55px; background: #f6f6f6; border-bottom: 1px solid #d7d7da; border-radius: 4px 4px 0 0; padding-left: 18px; color: #33333f; font-size: 17px; font-weight: 600; line-height: 54px; }
.pb { padding: 16px 16px 0; }
.table { display: grid; grid-template-columns: 67px 98px 96px 202px 79px 167px 168px 98px 152px 1fr; height: 40px; border: 1px solid #dde1e6; color: #212529; font-size: 13px; font-weight: 700; line-height: 37px; }
.table div { padding-left: 8px; border-left: 1px solid #dde1e6; }
.table div:first-child { border-left: 0; }
.table .c { padding-left: 0; text-align: center; }
.c1 { letter-spacing: -.19px; }
.c2, .c3, .c8 { letter-spacing: .47px; }
.c4, .c5, .c6, .c10 { letter-spacing: .36px; }
.c7 { letter-spacing: .3px; }
.c9 { letter-spacing: .18px; }
```
